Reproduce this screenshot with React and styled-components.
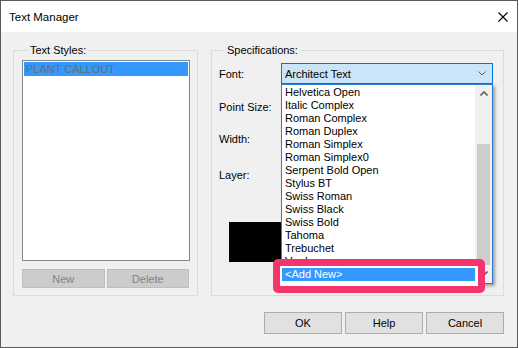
import React from "react";
import styled, { createGlobalStyle } from "styled-components";

const GlobalStyle = createGlobalStyle`
  html, body {
    margin: 0;
    padding: 0;
    background: #fff;
  }
  body {
    font-family: "Liberation Sans", Arial, sans-serif;
    font-size: 11px;
    color: #000;
  }
  * {
    box-sizing: border-box;
  }
`;

const Window = styled.div`
  width: 518px;
  height: 348px;
  border: 1px solid #5a5a5a;
  display: flex;
  flex-direction: column;
  background: #f0f0f0;
`;

const TitleBar = styled.div`
  flex: none;
  height: 31px;
  background: #fff;
  display: flex;
  align-items: center;
  justify-content: space-between;
  padding: 0 9px 0 8px;
  font-size: 11.5px;
`;

const Body = styled.div`
  flex: 1;
  display: flex;
  flex-direction: column;
  padding: 11px 13px 0 12px;
`;

const GroupsRow = styled.div`
  display: flex;
  gap: 13px;
  height: 253px;
`;

const Group = styled.fieldset`
  margin: 0;
  padding: ${(p) => p.$pad || "0"};
  border: 1px solid #dcdcdc;
  min-width: 0;
  width: ${(p) => (p.$width ? `${p.$width}px` : "auto")};
  flex: ${(p) => (p.$width ? "none" : "1")};
  display: flex;
  flex-direction: column;
`;

const Legend = styled.legend`
  margin-left: 6px;
  padding: 0 2px;
  font-size: 11px;
  line-height: 15px;
`;

const StyleList = styled.div`
  width: 168px;
  height: 201px;
  background: #fff;
  border: 1px solid #828790;
  padding: 1px;
`;

const StyleItem = styled.div`
  height: 14px;
  line-height: 14px;
  padding-left: 2px;
  background: ${(p) => (p.$selected ? "#3399ff" : "transparent")};
  color: #6d6d6d;
`;

const SmallButtons = styled.div`
  display: flex;
  gap: 2px;
  margin-top: 8px;
`;

const SmallButton = styled.button`
  width: 83px;
  height: 19px;
  padding: 0;
  background: #cccccc;
  border: 1px solid #bfbfbf;
  color: #838383;
  font: inherit;
`;

const FieldRow = styled.div`
  display: flex;
  align-items: center;
  height: 21px;
  margin-top: ${(p) => p.$gap || 0}px;
`;

const FieldLabel = styled.div`
  width: 62px;
  flex: none;
`;

const ComboWrap = styled.div`
  position: relative;
  width: 212px;
  height: 21px;
`;

const Combo = styled.div`
  height: 21px;
  background: #cce4f7;
  border: 1px solid #0078d7;
  display: flex;
  align-items: center;
  justify-content: space-between;
  padding: 0 6px 0 3px;
`;

const Dropdown = styled.div`
  position: absolute;
  top: 100%;
  left: 0;
  width: 212px;
  height: 200px;
  background: #fff;
  border: 1px solid #2f7fd0;
  box-shadow: 2px 2px 3px rgba(0, 0, 0, 0.35);
  display: flex;
  z-index: 2;
`;

const Items = styled.div`
  flex: 1;
  overflow: hidden;
  padding-top: 1px;
`;

const Item = styled.div`
  height: 13px;
  line-height: 13px;
  padding-left: 3px;
  white-space: nowrap;
  background: ${(p) => (p.$selected ? "#3399ff" : "transparent")};
  color: ${(p) => (p.$selected ? "#fff" : "#000")};
`;

const Scrollbar = styled.div`
  width: 17px;
  flex: none;
  background: #f0f0f0;
  display: flex;
  flex-direction: column;
  align-items: center;
`;

const ScrollArrow = styled.div`
  height: 17px;
  width: 17px;
  display: flex;
  align-items: center;
  justify-content: center;
`;

const Thumb = styled.div`
  width: 13px;
  height: 121px;
  margin-top: ${(p) => p.$offset}px;
  background: #cdcdcd;
`;

const Highlight = styled.div`
  position: absolute;
  left: -9px;
  top: 174px;
  width: 212px;
  height: 34px;
  border: 7px solid #f5336d;
  border-radius: 5px;
  box-shadow: inset 0 -4px 0 0 #fff, inset 0 0 0 2px #fff;
  pointer-events: none;
`;

const ColorSwatch = styled.div`
  width: 120px;
  height: 40px;
  margin: 37px 0 0 10px;
  background: #000;
`;

const DialogButtons = styled.div`
  display: flex;
  justify-content: flex-end;
  gap: 3px;
  margin-top: 16px;
`;

const DialogButton = styled.button`
  width: 78px;
  height: 22px;
  padding: 0;
  background: #e1e1e1;
  border: 1px solid #adadad;
  font: inherit;
  color: #000;
`;

const fonts = [
  "Helvetica Open",
  "Italic Complex",
  "Roman Complex",
  "Roman Duplex",
  "Roman Simplex",
  "Roman Simplex0",
  "Serpent Bold Open",
  "Stylus BT",
  "Swiss Roman",
  "Swiss Black",
  "Swiss Bold",
  "Tahoma",
  "Trebuchet",
  "Verdana",
];

export default function App() {
  return (
    <>
      <GlobalStyle />
      <Window>
        <TitleBar>
          <span>Text Manager</span>
          <svg width="10" height="10" viewBox="0 0 10 10">
            <path d="M0.5 0.5L9.5 9.5M9.5 0.5L0.5 9.5" stroke="#000" strokeWidth="1.1" />
          </svg>
        </TitleBar>
        <Body>
          <GroupsRow>
            <Group $width={185} $pad="2px 8px 0 8px">
              <Legend>Text Styles:</Legend>
              <StyleList>
                <StyleItem $selected>PLANT CALLOUT</StyleItem>
              </StyleList>
              <SmallButtons>
                <SmallButton>New</SmallButton>
                <SmallButton>Delete</SmallButton>
              </SmallButtons>
            </Group>

            <Group $pad="5px 7px 0 7px">
              <Legend>Specifications:</Legend>
              <FieldRow>
                <FieldLabel>Font:</FieldLabel>
                <ComboWrap>
                  <Combo>
                    <span>Architect Text</span>
                    <svg width="8" height="5" viewBox="0 0 8 5">
                      <path d="M0.5 0.5L4 4L7.5 0.5" fill="none" stroke="#606060" strokeWidth="1" />
                    </svg>
                  </Combo>
                  <Dropdown>
                    <Items>
                      {fonts.map((f) => (
                        <Item key={f}>{f}</Item>
                      ))}
                      <Item $selected>&lt;Add New&gt;</Item>
                    </Items>
                    <Scrollbar>
                      <ScrollArrow>
                        <svg width="8" height="5" viewBox="0 0 8 5">
                          <path d="M0.5 4.5L4 1L7.5 4.5" fill="none" stroke="#606060" strokeWidth="1.6" />
                        </svg>
                      </ScrollArrow>
                      <Thumb $offset={42} />
                      <ScrollArrow>
                        <svg width="8" height="5" viewBox="0 0 8 5">
                          <path d="M0.5 0.5L4 4L7.5 0.5" fill="none" stroke="#606060" strokeWidth="1.6" />
                        </svg>
                      </ScrollArrow>
                    </Scrollbar>
                    <Highlight />
                  </Dropdown>
                </ComboWrap>
              </FieldRow>
              <FieldRow $gap={12}>
                <FieldLabel>Point Size:</FieldLabel>
              </FieldRow>
              <FieldRow $gap={11}>
                <FieldLabel>Width:</FieldLabel>
              </FieldRow>
              <FieldRow $gap={15}>
                <FieldLabel>Layer:</FieldLabel>
              </FieldRow>
              <ColorSwatch />
            </Group>
          </GroupsRow>
          <DialogButtons>
            <DialogButton>OK</DialogButton>
            <DialogButton>Help</DialogButton>
            <DialogButton>Cancel</DialogButton>
          </DialogButtons>
        </Body>
      </Window>
    </>
  );
}
